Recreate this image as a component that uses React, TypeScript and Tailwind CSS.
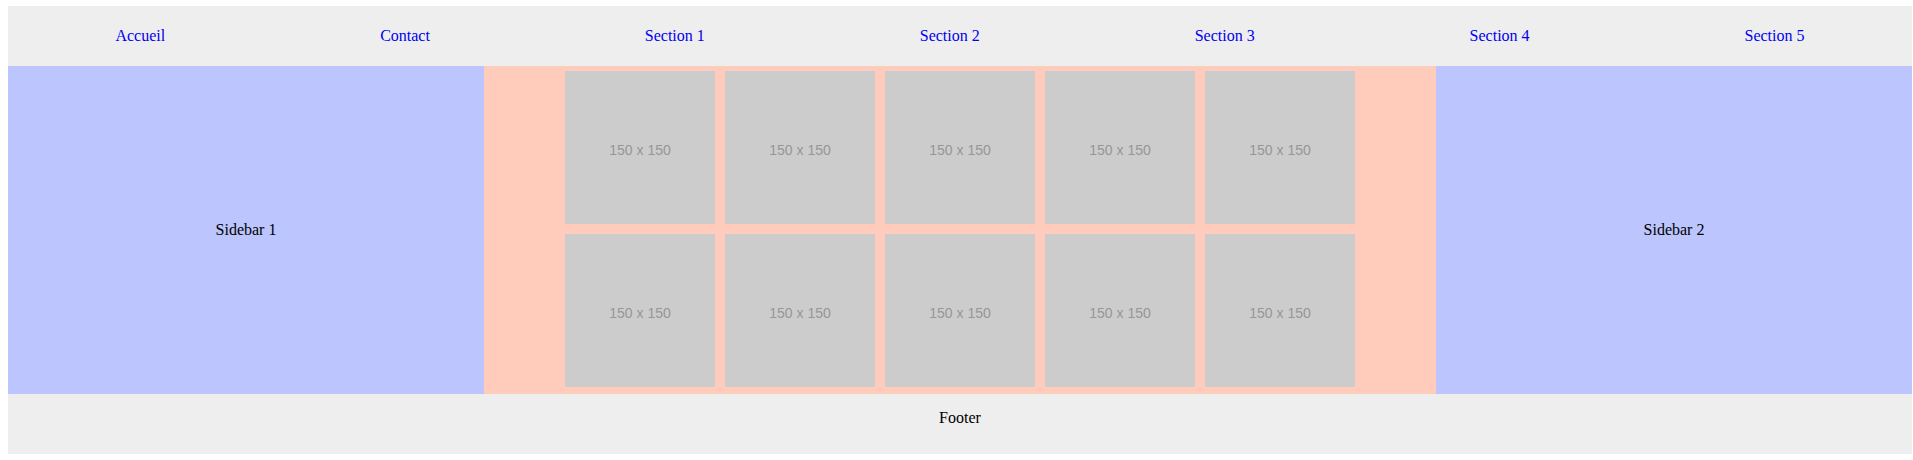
const navItems = ['Accueil', 'Contact', 'Section 1', 'Section 2', 'Section 3', 'Section 4', 'Section 5'];

function Placeholder() {
  return (
    <div className="w-[150px] h-[153px] bg-[#cccccc] flex items-center justify-center pt-[5px] text-[14px] text-[#969696] font-['Liberation_Sans',Arial,sans-serif]">
      150 x 150
    </div>
  );
}

export default function App() {
  return (
    <div className="pt-[6px] pl-[8px] pr-[1px] pb-[6px] bg-white font-['Liberation_Serif','Times_New_Roman',serif] text-[16px] text-black">
      {/* Header */}
      <nav className="h-[60px] bg-[#eeeeee] flex items-center justify-around">
        {navItems.map((item) => (
          <a key={item} href="#" className="text-[#0000ee]">
            {item}
          </a>
        ))}
      </nav>

      {/* Main */}
      <div className="flex h-[328px]">
        <aside className="w-[476px] bg-[#bcc5fe] flex items-center justify-center">Sidebar 1</aside>
        <main className="flex-1 bg-[#ffccbc] pt-[5px] flex justify-center">
          <div className="grid grid-cols-5 gap-x-[10px] gap-y-[10px] h-fit">
            {Array.from({ length: 10 }).map((_, i) => (
              <Placeholder key={i} />
            ))}
          </div>
        </main>
        <aside className="w-[476px] bg-[#bcc5fe] flex items-center justify-center">Sidebar 2</aside>
      </div>

      {/* Footer */}
      <footer className="h-[60px] bg-[#eeeeee] pt-[12px] leading-[24px] text-center">Footer</footer>
    </div>
  );
}
